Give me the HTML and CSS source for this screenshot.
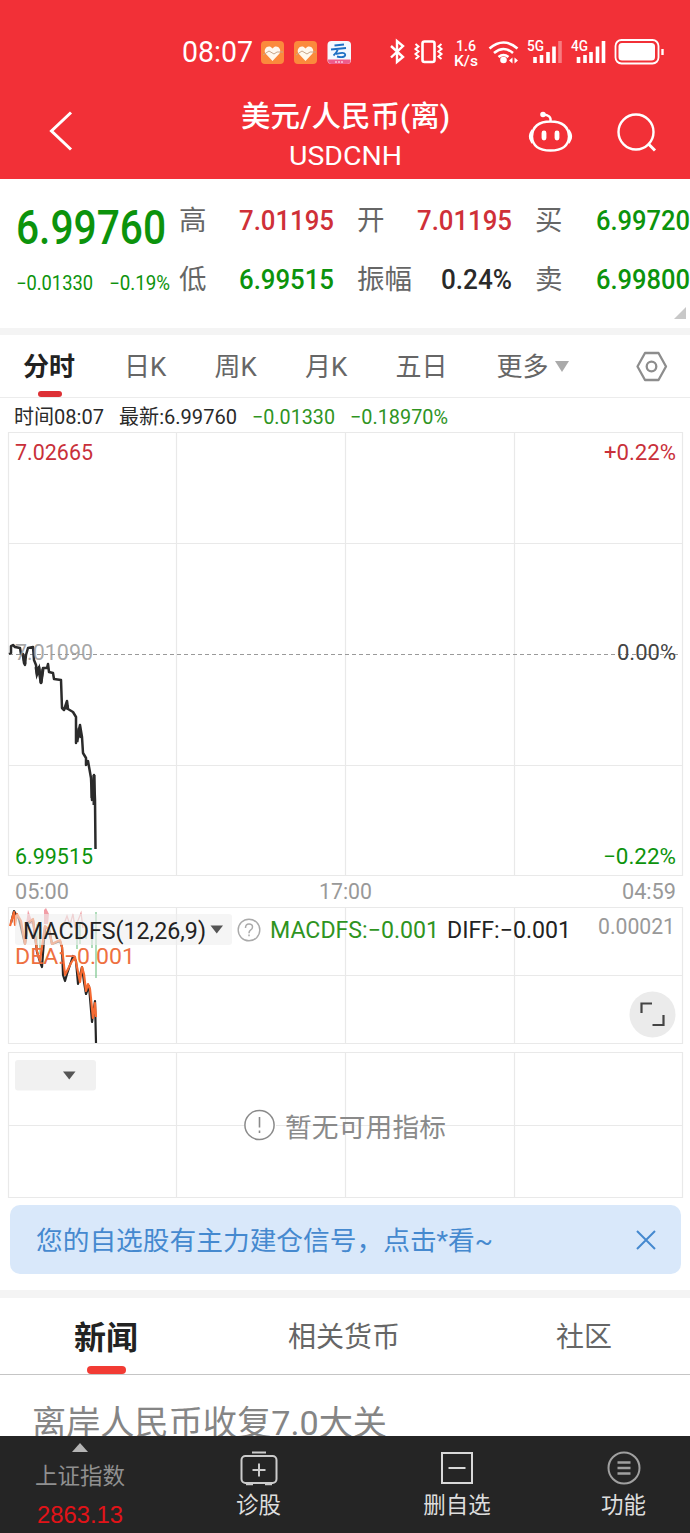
FILE: index.html
```html
<!DOCTYPE html>
<html lang="zh-CN">
<head>
<meta charset="utf-8">
<title>美元/人民币(离) USDCNH</title>
<link rel="stylesheet" href="styles.css">
</head>
<body>
<div class="page">
  <header class="top">
    <div class="status">
      <span class="clock fit" data-w="71">08:07</span>
      <svg class="apps" width="92" height="24" viewBox="260 39 92 24">
        <rect x="261" y="40" width="23" height="23" rx="4" fill="#fb8a3c"/>
        <path d="M272.500 60l-7-7.500c-3-5 3.500-10 7-5 3.500-5 10 0 7 5z" fill="#fff8ee"/>
        <path d="M263 54l6-4 5 3 3-2h6" stroke="#c9a58a" fill="none"/>
        <rect x="294" y="40" width="23" height="23" rx="4" fill="#fb8a3c"/>
        <path d="M305.500 60l-7-7.500c-3-5 3.500-10 7-5 3.500-5 10 0 7 5z" fill="#fff8ee"/>
        <path d="M296 54l6-4 5 3 3-2h6" stroke="#c9a58a" fill="none"/>
        <rect x="327.500" y="40" width="23.500" height="23" rx="4" fill="#f4f8ff"/>
        <path d="M328 58.500h22.500v1a3.500 3.500 0 0 1-3.500 3.500h-15.500a3.500 3.500 0 0 1-3.500-3.500z" fill="#ee5c8c"/>
        <path d="M334.500 44.500l9.500-1M331 48.500l15-1.500M338 48c-1 3-2.500 5-4.500 6.500M337 55.500c6 1.500 9 0 8-2.500s-5-1-9 0" stroke="#1e6fc4" stroke-width="1.900" fill="none"/>
        <path d="M335 61h8" stroke="#fff" stroke-dasharray="2 1"/>
      </svg>
      <svg class="signals" width="280" height="36" viewBox="385 33 280 36" fill="none" stroke="#fff" stroke-width="2">
        <path d="M391 45l12 11-6 5V40l6 5-12 11.500" stroke-width="2.400"/>
        <rect x="422.500" y="40.500" width="12" height="20.500" rx="2" stroke-width="2.600"/>
        <path d="M415.500 43l3 2.500-3 2.500 3 2.500-3 2.500 3 2.500-3 2.500M441.500 43l-3 2.500 3 2.500-3 2.500 3 2.500-3 2.500 3 2.500"/>
        <g fill="#fff" stroke="none" class="tiny">
          <text x="456" y="49.500" font-size="14.500" textLength="20" lengthAdjust="spacingAndGlyphs">1.6</text>
          <text x="454" y="64.500" font-size="14.500" textLength="24" lengthAdjust="spacingAndGlyphs">K/s</text>
          <text x="527" y="50" font-size="15.500" textLength="17" lengthAdjust="spacingAndGlyphs">5G</text>
          <text x="571" y="50" font-size="15.500" textLength="17" lengthAdjust="spacingAndGlyphs">4G</text>
          <circle cx="503.500" cy="59" r="3.300"/>
          <path d="M509 59.500l3.500-3v6zM518 59.500l-3.500-3v6z"/>
        </g>
        <path d="M489.500 47.500q14-12 28 0M494 52q9.500-8 19 0M498.500 56q5-4 10 0" stroke-width="2.600"/>
        <path d="M535 62v-6M541.500 62v-8M548 62V51M554 62V45.500" stroke-width="3.600"/>
        <path d="M560 62V40" stroke-width="3.600" stroke="#f77c80"/>
        <path d="M578.500 62v-6M585 62v-8M591 62V51M597.500 62V45.500M603.500 62V40" stroke-width="3.600"/>
        <rect x="615.500" y="39" width="43" height="23.500" rx="6" stroke-width="1.800"/>
        <rect x="618.500" y="42" width="36.500" height="17.500" rx="3.500" fill="#fff" stroke="none"/>
        <path d="M662.500 48v6" stroke-width="2.400"/>
      </svg>
    </div>
    <div class="nav">
      <svg class="back" width="26" height="42" viewBox="49 110 26 42"><path d="M71 112.500L51.500 131 71 149.500" fill="none" stroke="#fff" stroke-width="3"/></svg>
      <div class="title">
        <div class="name"><span class="fit" data-w="209">美元/人民币(离)</span></div>
        <div class="code"><span class="fit" data-w="113">USDCNH</span></div>
      </div>
      <svg class="tools" width="132" height="46" viewBox="526 108 132 46" fill="none" stroke="#fff" stroke-width="2.400">
        <path d="M550.500 121.500c12 0 18 5 18.500 15-.5 10-7 14-18.500 14s-18-4-18.500-14c.5-10 6.500-15 18.500-15zM550.500 121q1-6-7.500-6.500"/>
        <circle cx="543" cy="114.500" r="1.600" fill="#fff"/>
        <path d="M531.500 131q-4 5.500 0 11zM569.500 131q4 5.500 0 11z" fill="#fff" stroke-width="1.500"/>
        <path d="M544 133v5M557 133v5" stroke-width="4.800" stroke-linecap="round"/>
        <circle cx="636" cy="132" r="17.500"/><path d="M648 143.500l7 7" stroke-width="3"/>
      </svg>
    </div>
  </header>

  <section class="quote">
    <div class="last">
      <div class="price"><span class="fit" data-w="150">6.99760</span></div>
      <div class="delta"><span class="fit" data-w="77">−0.01330</span><span class="fit" data-w="61">−0.19%</span></div>
    </div>
    <div class="pairs">
      <div class="pair"><span>高</span><b class="red fit" data-w="95">7.01195</b></div>
      <div class="pair"><span>开</span><b class="red fit" data-w="95">7.01195</b></div>
      <div class="pair"><span>买</span><b class="green fit" data-w="94">6.99720</b></div>
      <div class="pair"><span>低</span><b class="green fit" data-w="95">6.99515</b></div>
      <div class="pair"><span>振幅</span><b class="fit" data-w="71">0.24%</b></div>
      <div class="pair"><span>卖</span><b class="green fit" data-w="94">6.99800</b></div>
    </div>
    <i class="corner"></i>
  </section>

  <nav class="periods">
    <span class="on">分时</span><span>日K</span><span>周K</span><span>月K</span><span>五日</span><span class="more">更多</span>
    <i class="down"></i>
    <svg width="34" height="34" viewBox="635 349 34 34" fill="none" stroke="#8d8d8d" stroke-width="2.300" stroke-linejoin="round"><path d="M637.500 366.500l7.500-13.500h13.500l7.500 13.500-7.500 13.500h-13.500z"/><circle cx="651.500" cy="366.500" r="4.800"/></svg>
  </nav>

  <div class="info">
    <span class="fit" data-w="90">时间08:07</span>
    <span class="fit" data-w="118">最新:6.99760</span>
    <span class="fit up" data-w="83">−0.01330</span>
    <span class="fit up" data-w="98">−0.18970%</span>
  </div>

  <svg class="chart" width="690" height="444" viewBox="0 432 690 444">
    <path class="grid" d="M8.500 432.500H682.500V875.500H8.500ZM176.500 432v444M345.500 432v444M514.500 432v444M8 543.500h675M8 765.500h675"/>
    <path d="M9 654.500H680" stroke="#9a9a9a" stroke-width="1.200" stroke-dasharray="4 3"/>
    <path d="M9 654l2-1v-7l2-1 2 2 5 1 1 6h2l1 9 1 2 1-10 2-7 5-1 1 13 2 5 1 9 2-7 2 16 2-15h4l1-4 1 8 4 1 1 6 7 1 1 28 2 2 3-9 1 8 5 3 3 5v26l4-18 2 12 1 16 3 5v7l2-4 3 17 1 22 2-25 1 25 .500 49" fill="none" stroke="#2b2b2b" stroke-width="2.500" stroke-linejoin="round"/>
    <path d="M36 667l1 7 2-5 2 14 2-14M92 782v16M94 775v30M77 742l2-14 2 10M65 709l3-4M23 655l2 9" stroke="#2b2b2b" stroke-width="3" fill="none"/>
    <g font-size="22">
      <text x="15" y="459.500" fill="#c9303a" textLength="78" lengthAdjust="spacingAndGlyphs">7.02665</text>
      <text x="604" y="459.500" fill="#c9303a" textLength="72" lengthAdjust="spacingAndGlyphs">+0.22%</text>
      <text x="15" y="659.500" fill="#999" fill-opacity=".85" textLength="78" lengthAdjust="spacingAndGlyphs">7.01090</text>
      <text x="617" y="659.500" fill="#444" textLength="59" lengthAdjust="spacingAndGlyphs">0.00%</text>
      <text x="603" y="864" fill="#0c930c" textLength="73" lengthAdjust="spacingAndGlyphs">−0.22%</text>
      <text x="15" y="864" fill="#0c930c" textLength="78" lengthAdjust="spacingAndGlyphs">6.99515</text>
    </g>
  </svg>

  <div class="axis"><span class="fit" data-w="54">05:00</span><span class="fit" data-w="53">17:00</span><span class="fit" data-w="54">04:59</span></div>

  <svg class="chart" width="690" height="138" viewBox="0 907 690 138">
    <path class="grid" d="M8.500 907.500H682.500V1043.500H8.500ZM176.500 907v137M345.500 907v137M514.500 907v137M8 975.500h675"/>
    <path d="M26 924l2-14 3 8 3 6M44 924v-14l2-2 3 6-1 10z" fill="#ef8490" fill-opacity=".8"/>
    <path d="M61 932l6-16 3 9 3-11 2 14 6-15 2 15" fill="none" stroke="#f0a7aa" stroke-width="1.300"/>
    <path d="M37 924v22M40 924v30M77 924v25M80 922v22M86 925v14M92 924v24M96 912v66" stroke="#78c58b" stroke-width="1.200"/>
    <path d="M11 923L14 911L19 919L25 944L28 923L33 920L37 952L40 962L42 967L45 927L49 929L52 944L60 941L62 947L63 975L65 981L67 974L73 956L76 961L78 984L82 967L84 982L86 994L89 986L92 1022L95 1001L96 1043" fill="none" stroke="#252525" stroke-width="2.200" stroke-linejoin="round"/>
    <path d="M10 926L14 912L15 925L17 914L21 921L25 944L28 923L33 919L37 951L40 961L45 926L49 930L52 944L60 940L62 947L65 975L71 963L75 957L78 972L80 982L82 967L84 974L86 991L88 984L90 989L93 1018L95 1003L96 1017" fill="none" stroke="#f56b33" stroke-width="2.200" stroke-linejoin="round"/>
    <rect x="15" y="914" width="217" height="31" rx="3" fill="#eee" fill-opacity=".6"/>
    <path d="M210.500 925.500h12.500l-6.250 8z" fill="#555"/>
    <g font-size="23">
      <text x="23" y="938.500" fill="#222" textLength="183" lengthAdjust="spacingAndGlyphs">MACDFS(12,26,9)</text>
      <text x="270" y="938" fill="#2f941f" textLength="169" lengthAdjust="spacingAndGlyphs">MACDFS:−0.001</text>
      <text x="447" y="938" fill="#222" textLength="124" lengthAdjust="spacingAndGlyphs">DIFF:−0.001</text>
      <text x="15" y="963.500" fill="#ee7041" font-size="22.500" textLength="120" lengthAdjust="spacingAndGlyphs">DEA:−0.001</text>
      <text x="598" y="934" fill="#999" font-size="22" textLength="77" lengthAdjust="spacingAndGlyphs">0.00021</text>
    </g>
    <circle cx="249" cy="930" r="10.800" fill="none" stroke="#aaa" stroke-width="1.400"/>
    <path d="M245.500 928q0-4 3.500-4t3.500 3q0 2-2 3.200-1.500 1-1.500 3M249 934.500v1.800" fill="none" stroke="#aaa" stroke-width="1.500"/>
    <circle cx="652.500" cy="1014.500" r="23" fill="#ebebeb"/>
    <path d="M641.500 1013v-9.500h10.500M663.500 1015v10h-11" fill="none" stroke="#444" stroke-width="2.200"/>
  </svg>

  <svg class="chart empty" width="690" height="147" viewBox="0 1052 690 147">
    <path class="grid" d="M8.500 1052.500H682.500V1197.500H8.500ZM176.500 1052v145M345.500 1052v145M514.500 1052v145M8 1125.500h236M276 1125.500h407"/>
    <rect x="15" y="1060" width="81" height="30.500" rx="3" fill="#f1f1f1"/>
    <path d="M63 1071.500h12.500l-6.250 8z" fill="#555"/>
    <circle cx="259.500" cy="1125" r="14.600" fill="none" stroke="#8a8a8a" stroke-width="1.500"/>
    <path d="M259.500 1117v10.500M259.500 1130.500v2.500" stroke="#8a8a8a" stroke-width="1.600"/>
    <text x="285" y="1136.500" fill="#8a8a8a" font-size="26.700" textLength="161">暂无可用指标</text>
  </svg>

  <div class="banner">
    <span class="fit" data-w="457">您的自选股有主力建仓信号，点击*看~</span>
    <svg width="20" height="20" viewBox="0 0 20 20"><path d="M1 1l18 18M19 1L1 19" stroke="#4589cf" stroke-width="2"/></svg>
  </div>

  <nav class="feeds"><span class="on">新闻</span><span>相关货币</span><span>社区</span></nav>
  <div class="news"><span class="fit" data-w="355">离岸人民币收复7.0大关</span></div>

  <footer class="bar">
    <div class="index"><i></i><span>上证指数</span><b class="fit" data-w="86">2863.13</b></div>
    <div class="act"><svg width="38" height="36" viewBox="0 0 38 36" fill="none" stroke="#ccc" stroke-width="2"><rect x="1.500" y="5" width="35" height="27" rx="4"/><path d="M12 1.500h14M19 12.500v13M12.500 19h13"/><path d="M6 33h7M25 33h7" stroke-width="2.500"/></svg><span>诊股</span></div>
    <div class="act wide"><svg width="38" height="36" viewBox="0 0 38 36" fill="none" stroke="#d8d8d8" stroke-width="2"><rect x="4" y="2" width="30" height="30"/><path d="M10.500 17h17"/></svg><span>删自选</span></div>
    <div class="act end"><svg width="38" height="36" viewBox="0 0 38 36" fill="none" stroke="#a0a0a0" stroke-width="2"><circle cx="19" cy="17" r="15.500"/><path d="M12.500 11.500h13M12.500 17h13M12.500 22.500h13" stroke-width="2.500"/></svg><span>功能</span></div>
  </footer>
</div>
<script src="fit.js"></script>
</body>
</html>
```

FILE: styles.css
```css
* { box-sizing: border-box; }
body {
  margin: 0;
  background: #fff;
  color: #2a2a2a;
  font-family: Roboto, "Noto Sans CJK SC", sans-serif;
}
i, b { font-style: normal; font-weight: 500; }
svg { display: block; flex: none; }
.page { width: 690px; height: 1533px; overflow: hidden; display: flex; flex-direction: column; }
.page > * { flex: none; }
.fit { display: inline-block; white-space: nowrap; transform-origin: left center; }
.red { color: #cf3038; }
.green { color: #0c930c; }

.top { height: 179px; background: #f23037; color: #fff; }
.status { height: 76px; padding: 27px 0 0 182px; display: flex; align-items: center; }
.clock { font-size: 30px; line-height: 50px; }
.apps { margin-left: 7px; }
.signals { margin-left: 33px; }
.tiny { font-weight: 500; }
.nav { height: 103px; display: flex; align-items: center; padding: 6px 0 0 49px; }
.title { width: 300px; margin: 0 31px 0 120px; padding-top: 11px; text-align: center; }
.name { font-size: 29px; line-height: 40px; font-weight: 500; }
.code { font-size: 26px; line-height: 39px; }

.quote { height: 156px; display: flex; position: relative; border-bottom: 7px solid #f4f4f4; }
.last { width: 179px; flex: none; padding: 24px 0 0 16px; }
.price { height: 50px; font-size: 48px; line-height: 50px; font-weight: 500; color: #0c930c; }
.delta { display: flex; gap: 16px; margin-top: 15px; font-size: 19.5px; line-height: 31px; color: #0c930c; }
.pairs { display: grid; grid-template-columns: repeat(3, 155px); grid-auto-rows: 59px; column-gap: 23px; padding-top: 12px; }
.pair { display: flex; justify-content: space-between; align-items: center; font-size: 28.5px; line-height: 40px; }
.pair span { color: #666; font-size: 27.5px; }
.corner { position: absolute; left: 674px; top: 128px; border-left: 12px solid transparent; border-bottom: 12px solid #c8c8c8; }

.periods { height: 63px; display: flex; align-items: center; padding-left: 23px; border-bottom: 1px solid #ececec; font-size: 26px; color: #666; white-space: nowrap; }
.periods span { position: relative; width: 90.5px; line-height: 64px; height: 62px; }
.periods .on { width: 101px; color: #222; font-weight: 700; }
.periods .on::after { content: ""; position: absolute; left: 15px; bottom: 0; width: 24px; height: 6px; border-radius: 3px; background: #dd3035; }
.periods span:nth-child(5) { width: 101px; }
.periods .more { width: 58px; }
.down { border: 7.5px solid transparent; border-top: 11px solid #aaa; border-bottom: 0; }
.periods svg { margin-left: auto; margin-right: 21px; }

.info { height: 34px; display: flex; gap: 15px; padding-left: 14px; font-size: 20.5px; line-height: 38px; }
.up { color: #2f941f; }
.grid { fill: none; stroke: #e9e9e9; stroke-width: 1.2; }
.axis { height: 31px; display: flex; justify-content: space-between; padding: 0 14px 0 15px; color: #999; font-size: 21.5px; line-height: 32px; }
.empty { margin-top: 7px; }

.banner { height: 69px; margin: 6px 9px 16px 10px; padding: 0 25px 0 26px; border-radius: 10px; background: #d9e8fa; color: #4589cf; font-size: 26px; line-height: 75px; display: flex; align-items: center; justify-content: space-between; }
.banner span { height: 72px; }
.feeds { height: 85px; border-top: 8px solid #f4f4f4; border-bottom: 1px solid #c5c5c5; padding-left: 74px; display: flex; font-size: 28px; line-height: 80px; color: #666; white-space: nowrap; }
.feeds span { width: 268px; flex: none; position: relative; }
.feeds span:last-child { width: 100px; }
.feeds .on { width: 214px; font-size: 32px; font-weight: 700; color: #222; }
.feeds .on::after { content: ""; position: absolute; left: 13px; bottom: 0; width: 39px; height: 8px; border-radius: 4px; background: #f23b34; }
.news { height: 61px; padding-left: 32px; overflow: hidden; font-size: 34px; line-height: 96px; color: #858585; }

.bar { height: 97px; background: #252525; display: flex; color: #ddd; font-size: 22.5px; line-height: 30px; }
.index { width: 160px; display: flex; flex-direction: column; align-items: center; padding-top: 7px; color: #909090; }
.index i { border: 8px solid transparent; border-bottom: 9px solid #b5b5b5; border-top: 0; }
.index span { margin-top: 9px; }
.index b { margin-top: 9px; font-family: "Liberation Sans", sans-serif; font-weight: 400; font-size: 23.5px; color: #e21318; }
.act { width: 197px; display: flex; flex-direction: column; align-items: center; padding-top: 15px; }
.act span { margin-top: 3px; }
.wide { width: 200px; }
.end { width: 133px; }
```

FILE: fit.js
```js
// Condenses each .fit label to its data-w width and keeps its layout box in step.
document.querySelectorAll('.fit').forEach(function (el) {
  var target = Number(el.dataset.w);
  var natural = el.getBoundingClientRect().width;
  el.style.transform = 'scaleX(' + target / natural + ')';
  el.style.marginRight = target - natural + 'px';
});
```
